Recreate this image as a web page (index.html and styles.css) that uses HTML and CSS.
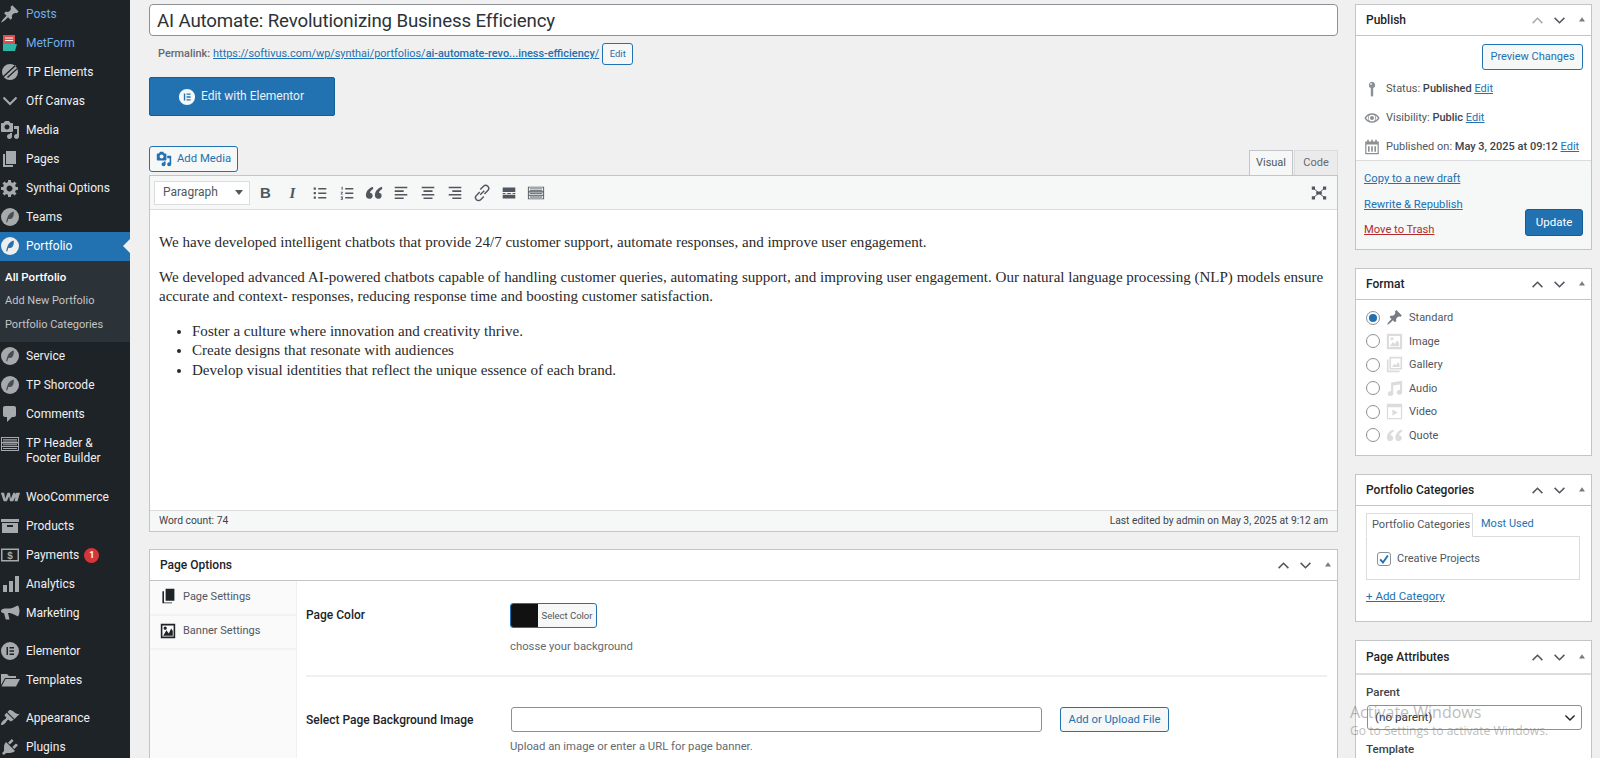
FILE: index.html
```html
<!DOCTYPE html>
<html lang="en">
<head>
<meta charset="utf-8">
<title>Edit Portfolio</title>
<link rel="stylesheet" href="styles.css">
</head>
<body>
<svg class="defs" aria-hidden="true">
  <symbol id="i-pin" viewBox="0 0 20 20"><path d="M10.44 3.02l1.82-1.82 6.36 6.35-1.83 1.82c-1.05-.68-2.48-.57-3.41.36l-.75.75c-.92.93-1.04 2.35-.35 3.41l-1.83 1.82-2.41-2.41-2.8 2.79c-.42.42-3.38 2.71-3.8 2.29s1.86-3.39 2.28-3.81l2.79-2.79L4.1 9.36l1.83-1.82c1.05.69 2.48.57 3.4-.36l.75-.75c.93-.92 1.05-2.35.36-3.41z"/></symbol>
  <symbol id="i-media" viewBox="0 0 20 20"><path d="M13 11V4c0-.55-.45-1-1-1h-1.67L9 1H5L3.67 3H2c-.55 0-1 .45-1 1v7c0 .55.45 1 1 1h10c.55 0 1-.45 1-1zM7 4.5c1.38 0 2.5 1.12 2.5 2.5S8.38 9.5 7 9.5 4.5 8.38 4.5 7 5.62 4.5 7 4.5zM14 6h5v10.5c0 1.38-1.12 2.5-2.5 2.5S14 17.88 14 16.5s1.12-2.5 2.5-2.5c.17 0 .34.02.5.05V9h-3V6zm-4 8.05V13h2v3.5c0 1.38-1.12 2.5-2.5 2.5S7 17.88 7 16.5 8.12 14 9.5 14c.17 0 .34.02.5.05z"/></symbol>
  <symbol id="i-page" viewBox="0 0 20 20"><path d="M6 15V2h10v13H6zm-1 1h8v2H3V5h2v11z"/></symbol>
  <symbol id="i-gear" viewBox="0 0 20 20"><path d="M18 12h-2.18c-.17.7-.44 1.35-.81 1.93l1.54 1.54-2.1 2.1-1.54-1.54c-.58.36-1.23.63-1.91.79V19H8v-2.18c-.68-.16-1.33-.43-1.91-.79l-1.54 1.54-2.12-2.12 1.54-1.54c-.36-.58-.63-1.23-.79-1.91H1V9.03h2.17c.16-.7.44-1.35.8-1.94L2.43 5.55l2.1-2.1 1.54 1.54c.58-.37 1.24-.64 1.93-.81V2h3v2.18c.68.16 1.33.43 1.91.79l1.54-1.54 2.12 2.12-1.54 1.54c.36.59.64 1.24.8 1.94H18V12zm-8.5 1.5c1.66 0 3-1.34 3-3s-1.34-3-3-3-3 1.34-3 3 1.34 3 3 3z"/></symbol>
  <symbol id="i-comment" viewBox="0 0 20 20"><path d="M5 2h9c1.1 0 2 .9 2 2v7c0 1.1-.9 2-2 2h-2l-5 5v-5H5c-1.1 0-2-.9-2-2V4c0-1.1.9-2 2-2z"/></symbol>
  <symbol id="i-plug" viewBox="0 0 20 20"><path d="M13.11 4.36L9.87 7.6 8 5.73l3.24-3.24c.35-.34 1.05-.2 1.56.32.52.51.66 1.21.31 1.55zm-8 1.77l.91-1.12 9.01 9.01-1.19.84c-.71.71-2.63 1.16-3.82 1.16H6.14L4.9 17.26c-.59.59-1.54.59-2.12 0-.59-.58-.59-1.53 0-2.12l1.24-1.24v-3.88c0-1.13.4-3.19 1.09-3.89zm7.26 3.97l3.24-3.24c.34-.35 1.04-.21 1.55.31.52.51.66 1.21.31 1.55l-3.24 3.25z"/></symbol>
  <symbol id="i-brush" viewBox="0 0 20 20"><path d="M14.5 11.1L7.4 4l1.5-1.5c.5-.6 2.3-.5 3.5.3 1.2.8 1.4 1.3 2.9 2.1 1.2.6 2.5 1.3 4.5.9zm-.7.7L6.7 4.7 4.9 6.5c-.4.4-.4 1 0 1.4L6 9c.4.4.4 1 0 1.4-.6.6-1.4 1.1-2.2 1.7-.4.3-.7.5-1 .8-1.2 1.2-2.3 3.4-1.7 4 .6.6 2.8-.5 4-1.7.3-.3.6-.6.8-1 .6-.8 1.1-1.6 1.7-2.2.4-.4 1-.4 1.4 0l1.1 1.1c.4.4 1 .4 1.4 0z"/></symbol>
  <symbol id="i-chart" viewBox="0 0 20 20"><path d="M3 11h4v7H3zM9 7h4v11H9zM15 2h4v16h-4z"/></symbol>
  <symbol id="i-mega" viewBox="0 0 20 20"><path d="M18 2.5c1 1.5 1.500 4 1.500 5.500s-.5 4-1.500 5.500c-1.500-.5-5-3-8-3.500H8l1.500 6.500H5.800L4 10.200C2.300 10 1 9.300 1 8c0-1.500 2-2.500 4-2.500h5c3-.5 6.500-2.500 8-3z"/></symbol>
  <symbol id="i-folder" viewBox="0 0 20 20"><path d="M1 4h6l2 2h7v2H5L1 15V4zm4.500 5H20l-4 7.500H1.500z"/></symbol>
  <symbol id="i-grid" viewBox="0 0 20 20"><path fill-rule="evenodd" d="M1 3h18v14H1zM2 4v4h16V4zM2 9.500v2.500h16V9.500zM2 13v3h16v-3zM3 5h14v.8H3zM3 6.600h14v.8H3zM3 10.300h14v.9H3zM3 14h14v1H3z"/></symbol>
  <symbol id="i-woo" viewBox="0 0 24 14"><path d="M1 2h4l1.200 7L9 2h3l1 7 3-7h2.500l-.8 2 2-2H24l-3 10h-3.500l1-5-2.800 5H12l-1-6-2.800 6H4.500z"/></symbol>
  <symbol id="i-box" viewBox="0 0 20 20"><path d="M1 3h18v3H1zM2 7h16v10H2zm5 2v2h6V9z" fill-rule="evenodd"/></symbol>
  <symbol id="i-pen" viewBox="0 0 20 20"><circle cx="10" cy="10" r="9"/><path fill="#2a2f38" fill-opacity=".75" d="M13.800 4.600c-2.300.2-4.900 2.400-6.200 5.300-.6 1.400-1.100 3.200-1.500 5.300l1.100.3c.4-1.500.8-2.800 1.300-3.800 1.500.5 3 .1 4-1 1.100-1.300 1.500-3.400 1.300-6.100z"/></symbol>
  <symbol id="i-pen-on" viewBox="0 0 20 20"><circle cx="10" cy="10" r="9" fill="#eee"/><path fill="#2271b1" d="M13.800 4.600c-2.300.2-4.900 2.400-6.200 5.300-.6 1.400-1.100 3.200-1.500 5.300l1.100.3c.4-1.500.8-2.800 1.300-3.800 1.500.5 3 .1 4-1 1.100-1.300 1.500-3.400 1.300-6.100z"/></symbol>
  <symbol id="i-ele" viewBox="0 0 20 20"><path fill-rule="evenodd" d="M10 1a9 9 0 1 1 0 18 9 9 0 0 1 0-18zM6.500 6v8H8V6zM9.500 6v1.500H14V6zM9.500 9.250v1.500H14v-1.500zM9.500 12.500V14H14v-1.500z"/></symbol>
  <symbol id="i-up" viewBox="0 0 20 20"><path d="M3.500 13.500L10 7l6.500 6.500" fill="none" stroke="currentColor" stroke-width="2"/></symbol>
  <symbol id="i-down" viewBox="0 0 20 20"><path d="M3.500 6.500L10 13l6.500-6.500" fill="none" stroke="currentColor" stroke-width="2"/></symbol>
  <symbol id="i-tri" viewBox="0 0 20 20"><path d="M10 5.500l5 7H5z"/></symbol>
  <symbol id="i-image" viewBox="0 0 20 20"><path fill-rule="evenodd" d="M1 1h18v18H1zM3.500 3.500v13h13v-13zM4.500 15.500l3.500-5 2.500 2.500L13 8.500l2.500 3.500v3.500zM7 5a1.800 1.800 0 1 1 0 3.600A1.800 1.800 0 0 1 7 5z"/></symbol>
  <symbol id="i-gallery" viewBox="0 0 20 20"><path fill-rule="evenodd" d="M4 1h15v15H4zM6 3v11h11V3zM7 13l3-4 2 2 2-4 2 3v3zM1 4h2v13h13v2H1z"/></symbol>
  <symbol id="i-audio" viewBox="0 0 20 20"><path d="M6 3l13-2v13.500a3.200 2.800 0 1 1-2.500-2.700V5.200l-8 1.300v9.500a3.200 2.800 0 1 1-2.500-2.700z"/></symbol>
  <symbol id="i-video" viewBox="0 0 20 20"><path fill-rule="evenodd" d="M1 1h18v18H1zM2.500 5v12.500h15V5zM7.500 7.500l6.500 3.800-6.500 3.800z"/></symbol>
  <symbol id="i-quote" viewBox="0 0 20 20"><path d="M9 3C5 4 1 7.500 1 12.500c0 2.300 1.500 4 3.700 4S8.500 15 8.500 13s-1.400-3.300-3.100-3.300c.4-1.800 1.800-3.300 3.600-4zm10 0c-4 1-8 4.500-8 9.500 0 2.300 1.500 4 3.700 4s3.800-1.500 3.800-3.500-1.400-3.300-3.100-3.300c.4-1.800 1.800-3.300 3.600-4z"/></symbol>
  <symbol id="i-eye" viewBox="0 0 20 20"><path fill-rule="evenodd" d="M10 4c4.200 0 7.600 2.500 9.500 6-1.900 3.500-5.300 6-9.500 6S2.400 13.500.5 10C2.400 6.500 5.800 4 10 4zm0 1.800A4.200 4.200 0 1 0 10 14.200 4.200 4.200 0 0 0 10 5.800zM2.600 10c.9 1.400 2.200 2.500 3.600 3.200A5.500 5.500 0 0 1 4.800 10c0-1.200.5-2.400 1.300-3.200C4.700 7.500 3.500 8.600 2.600 10zm11.200-3.200c.8.800 1.400 2 1.400 3.200s-.5 2.400-1.400 3.200c1.400-.7 2.700-1.800 3.600-3.200-.9-1.400-2.200-2.500-3.600-3.200zM10 7.500a2.500 2.500 0 1 1 0 5 2.500 2.500 0 0 1 0-5z"/></symbol>
  <symbol id="i-cal" viewBox="0 0 20 20"><path fill-rule="evenodd" d="M1.500 3H4V1h2v2h3V1h2v2h3V1h2v2h2.500v16h-17zM3 7v10.500h14V7zM5 9h2v7H5zM9 9h2v7H9zM13 9h2v7h-2z"/></symbol>
  <symbol id="i-mapin" viewBox="0 0 20 20"><path d="M10 1a4 4 0 0 1 1.500 7.700V18L10 20l-1.500-2V8.700A4 4 0 0 1 10 1zM8.800 2.800a1.100 1.100 0 1 0 0 2.200 1.100 1.100 0 0 0 0-2.200z" fill-rule="evenodd"/></symbol>
  <symbol id="i-book" viewBox="0 0 20 20"><path d="M7 1h11v15H7zM5 4v14h10v1H3V4z"/></symbol>
  <symbol id="i-banner" viewBox="0 0 20 20"><path fill-rule="evenodd" d="M1 1h18v18H1zM3 3v14h14V3zM4 16l4-7 3 4 3-6 2 3v6zM6.500 4.500a2 2 0 1 1 0 4 2 2 0 0 1 0-4z"/></symbol>
  <symbol id="i-ul" viewBox="0 0 20 20"><path d="M3 4h2.400v2.400H3zM8 4.500h9V6H8zM3 9h2.400v2.400H3zM8 9.500h9V11H8zM3 14h2.400v2.400H3zM8 14.500h9V16H8z"/></symbol>
  <symbol id="i-ol" viewBox="0 0 20 20"><path d="M8 4.500h9V6H8zM8 9.500h9V11H8zM8 14.500h9V16H8zM4 3h1.200v3.500H4zM3 8.500h2.400v1L4.200 11h1.200v.8H3v-.8l1.400-1.600H3zM3 14h2.400v3.500H3v-.8h1.400v-.6H3.600v-.7h.8V15H3z"/></symbol>
  <symbol id="i-left" viewBox="0 0 20 20"><path d="M3 3h14v1.800H3zM3 7h10v1.800H3zM3 11h14v1.800H3zM3 15h10v1.800H3z"/></symbol>
  <symbol id="i-center" viewBox="0 0 20 20"><path d="M3 3h14v1.800H3zM5 7h10v1.800H5zM3 11h14v1.800H3zM5 15h10v1.800H5z"/></symbol>
  <symbol id="i-right" viewBox="0 0 20 20"><path d="M3 3h14v1.800H3zM7 7h10v1.800H7zM3 11h14v1.800H3zM7 15h10v1.800H7z"/></symbol>
  <symbol id="i-link" viewBox="0 0 20 20"><path d="M8 12L12.500 7.500M7.500 9L3.800 12.700a3.300 3.300 0 0 0 4.700 4.700L12 13.800M8 6.200L11.700 2.600a3.300 3.300 0 0 1 4.700 4.700L12.700 11" fill="none" stroke="currentColor" stroke-width="1.600"/></symbol>
  <symbol id="i-more" viewBox="0 0 20 20"><path d="M3 4h14v5H3zM3 12h14v4H3zM3 10h3v1H3zM8 10h4v1H8zM14 10h3v1h-3z"/></symbol>
  <symbol id="i-full" viewBox="0 0 20 20"><path d="M1 2h4v4H1zM15 2h4v4h-4zM1 14h4v4H1zM15 14h4v4h-4zM6.500 8h7v4h-7z"/><path d="M3 4l14 12M17 4L3 16" stroke="currentColor" stroke-width="1.200" fill="none"/></symbol>
</svg>

<div class="page">
  <nav class="menu">
    <a class="mi link"><svg class="mic"><use href="#i-pin"/></svg><span>Posts</span></a>
    <a class="mi link"><svg class="mic" viewBox="0 0 20 20"><path fill="#e04b4b" d="M3 2h12v9H3z"/><path fill="#2fb5a5" d="M3 11h14l-2 7H3z"/><path fill="#fff" d="M5 4.500h8v1H5zM5 7h8v1H5z"/></svg><span>MetForm</span></a>
    <a class="mi"><svg class="mic" viewBox="0 0 20 20"><path fill-rule="evenodd" d="M10 2a8 8 0 1 1 0 16 8 8 0 0 1 0-16zM3 14L15 3l1 1L4 15zM7 15L17 6l.7 1L8 16z"/></svg><span>TP Elements</span></a>
    <a class="mi"><svg class="mic"><use href="#i-down"/></svg><span>Off Canvas</span></a>
    <a class="mi"><svg class="mic"><use href="#i-media"/></svg><span>Media</span></a>
    <a class="mi"><svg class="mic"><use href="#i-page"/></svg><span>Pages</span></a>
    <a class="mi"><svg class="mic"><use href="#i-gear"/></svg><span>Synthai Options</span></a>
    <a class="mi"><svg class="mic"><use href="#i-pen"/></svg><span>Teams</span></a>
    <a class="mi current"><svg class="mic"><use href="#i-pen-on"/></svg><span>Portfolio</span></a>
    <div class="sub">
      <a class="si on">All Portfolio</a>
      <a class="si">Add New Portfolio</a>
      <a class="si">Portfolio Categories</a>
    </div>
    <a class="mi"><svg class="mic"><use href="#i-pen"/></svg><span>Service</span></a>
    <a class="mi"><svg class="mic"><use href="#i-pen"/></svg><span>TP Shorcode</span></a>
    <a class="mi"><svg class="mic"><use href="#i-comment"/></svg><span>Comments</span></a>
    <a class="mi two"><svg class="mic"><use href="#i-grid"/></svg><span>TP Header &amp; Footer Builder</span></a>
    <a class="mi gap"><svg class="mic woo"><use href="#i-woo"/></svg><span>WooCommerce</span></a>
    <a class="mi"><svg class="mic"><use href="#i-box"/></svg><span>Products</span></a>
    <a class="mi"><svg class="mic" viewBox="0 0 20 20"><path fill-rule="evenodd" d="M1 3.500h18v13H1zM2.500 5v10h15V5z"/><text class="dollar" x="10" y="13.500" text-anchor="middle">$</text></svg><span>Payments</span><b class="badge">1</b></a>
    <a class="mi"><svg class="mic"><use href="#i-chart"/></svg><span>Analytics</span></a>
    <a class="mi"><svg class="mic"><use href="#i-mega"/></svg><span>Marketing</span></a>
    <a class="mi gap"><svg class="mic"><use href="#i-ele"/></svg><span>Elementor</span></a>
    <a class="mi"><svg class="mic"><use href="#i-folder"/></svg><span>Templates</span></a>
    <a class="mi gap"><svg class="mic"><use href="#i-brush"/></svg><span>Appearance</span></a>
    <a class="mi"><svg class="mic"><use href="#i-plug"/></svg><span>Plugins</span></a>
  </nav>

  <main class="content">
    <div class="col-main">
      <div class="title-input">AI Automate: Revolutionizing Business Efficiency</div>
      <div class="permalink">
        <strong>Permalink:</strong>
        <a class="plink">https://softivus.com/wp/synthai/portfolios/<b>ai-automate-revo...iness-efficiency</b>/</a>
        <span class="btn tiny">Edit</span>
      </div>
      <div class="ele-btn"><svg class="ele-ic"><use href="#i-ele"/></svg>Edit with Elementor</div>

      <div class="media-row">
        <span class="btn add-media"><svg class="am-ic"><use href="#i-media"/></svg>Add Media</span>
        <div class="tabs"><span class="tab on">Visual</span><span class="tab">Code</span></div>
      </div>
      <section class="editor">
        <div class="toolbar">
          <div class="fmt"><span>Paragraph</span><i class="caret"></i></div>
          <span class="tb tb-b">B</span>
          <span class="tb tb-i">I</span>
          <span class="tb"><svg class="tbi"><use href="#i-ul"/></svg></span>
          <span class="tb"><svg class="tbi"><use href="#i-ol"/></svg></span>
          <span class="tb"><svg class="tbi"><use href="#i-quote"/></svg></span>
          <span class="tb"><svg class="tbi"><use href="#i-left"/></svg></span>
          <span class="tb"><svg class="tbi"><use href="#i-center"/></svg></span>
          <span class="tb"><svg class="tbi"><use href="#i-right"/></svg></span>
          <span class="tb"><svg class="tbi"><use href="#i-link"/></svg></span>
          <span class="tb"><svg class="tbi"><use href="#i-more"/></svg></span>
          <span class="tb"><svg class="tbi"><use href="#i-grid"/></svg></span>
          <span class="tb tb-full"><svg class="tbi small"><use href="#i-full"/></svg></span>
        </div>
        <div class="body">
          <p>We have developed intelligent chatbots that provide 24/7 customer support, automate responses, and improve user engagement.</p>
          <p>We developed advanced AI-powered chatbots capable of handling customer queries, automating support, and improving user engagement. Our natural language processing (NLP) models ensure accurate and context- responses, reducing response time and boosting customer satisfaction.</p>
          <ul>
            <li>Foster a culture where innovation and creativity thrive.</li>
            <li>Create designs that resonate with audiences</li>
            <li>Develop visual identities that reflect the unique essence of each brand.</li>
          </ul>
        </div>
        <div class="status"><span>Word count: 74</span><span>Last edited by admin on May 3, 2025 at 9:12 am</span></div>
      </section>

      <section class="box options">
        <header class="box-h"><h2>Page Options</h2><div class="ctl"><svg class="c"><use href="#i-up"/></svg><svg class="c"><use href="#i-down"/></svg><svg class="c t"><use href="#i-tri"/></svg></div></header>
        <div class="opt-body">
          <aside class="opt-tabs">
            <div class="opt-tab"><svg class="ot-ic"><use href="#i-book"/></svg>Page Settings</div>
            <div class="opt-tab"><svg class="ot-ic"><use href="#i-banner"/></svg>Banner Settings</div>
          </aside>
          <div class="opt-main">
            <div class="field f1">
              <label>Page Color</label>
              <div class="val">
                <div class="color"><i class="swatch"></i><span>Select Color</span></div>
                <p class="help">chosse your background</p>
              </div>
            </div>
            <div class="field f2">
              <label>Select Page Background Image</label>
              <div class="val">
                <div class="upl"><div class="txt"></div><span class="btn upb">Add or Upload File</span></div>
                <p class="help">Upload an image or enter a URL for page banner.</p>
              </div>
            </div>
          </div>
        </div>
      </section>
    </div>

    <aside class="col-side">
      <section class="box publish">
        <header class="box-h"><h2>Publish</h2><div class="ctl"><svg class="c dim"><use href="#i-up"/></svg><svg class="c"><use href="#i-down"/></svg><svg class="c t"><use href="#i-tri"/></svg></div></header>
        <div class="pub-top">
          <div class="prev"><span class="btn">Preview Changes</span></div>
          <div class="pub-row"><svg class="pi"><use href="#i-mapin"/></svg><span>Status: <b>Published</b> <a>Edit</a></span></div>
          <div class="pub-row"><svg class="pi"><use href="#i-eye"/></svg><span>Visibility: <b>Public</b> <a>Edit</a></span></div>
          <div class="pub-row"><svg class="pi"><use href="#i-cal"/></svg><span>Published on: <b>May 3, 2025 at 09:12</b> <a>Edit</a></span></div>
        </div>
        <div class="pub-foot">
          <div class="pf-links"><a>Copy to a new draft</a><a>Rewrite &amp; Republish</a><a class="red">Move to Trash</a></div>
          <span class="update">Update</span>
        </div>
      </section>

      <section class="box format">
        <header class="box-h"><h2>Format</h2><div class="ctl"><svg class="c"><use href="#i-up"/></svg><svg class="c"><use href="#i-down"/></svg><svg class="c t"><use href="#i-tri"/></svg></div></header>
        <div class="fmt-list">
          <div class="fr"><i class="radio on"></i><svg class="fi pin"><use href="#i-pin"/></svg>Standard</div>
          <div class="fr"><i class="radio"></i><svg class="fi"><use href="#i-image"/></svg>Image</div>
          <div class="fr"><i class="radio"></i><svg class="fi"><use href="#i-gallery"/></svg>Gallery</div>
          <div class="fr"><i class="radio"></i><svg class="fi"><use href="#i-audio"/></svg>Audio</div>
          <div class="fr"><i class="radio"></i><svg class="fi"><use href="#i-video"/></svg>Video</div>
          <div class="fr"><i class="radio"></i><svg class="fi"><use href="#i-quote"/></svg>Quote</div>
        </div>
      </section>

      <section class="box cats">
        <header class="box-h"><h2>Portfolio Categories</h2><div class="ctl"><svg class="c"><use href="#i-up"/></svg><svg class="c"><use href="#i-down"/></svg><svg class="c t"><use href="#i-tri"/></svg></div></header>
        <div class="cat-body">
          <div class="cat-tabs"><span class="ct on">Portfolio Categories</span><a class="ct">Most Used</a></div>
          <div class="cat-panel"><i class="check"><svg viewBox="0 0 14 14" class="chk"><path d="M2.500 7.500L5.800 11 11.500 3" fill="none" stroke="#2271b1" stroke-width="2.200"/></svg></i>Creative Projects</div>
          <a class="add-cat">+ Add Category</a>
        </div>
      </section>

      <section class="box attrs">
        <header class="box-h thick"><h2>Page Attributes</h2><div class="ctl"><svg class="c"><use href="#i-up"/></svg><svg class="c"><use href="#i-down"/></svg><svg class="c t"><use href="#i-tri"/></svg></div></header>
        <div class="attr-body">
          <p class="al">Parent</p>
          <div class="sel"><span>(no parent)</span><svg class="sel-c"><use href="#i-down"/></svg></div>
          <p class="al tpl">Template</p>
        </div>
      </section>
    </aside>
  </main>
</div>
<div class="watermark"><div class="w1">Activate Windows</div><div class="w2">Go to Settings to activate Windows.</div></div>
</body>
</html>
```
FILE: styles.css
```css
* { box-sizing: border-box; }
html, body { margin: 0; height: 758px; overflow: hidden; }
body { background: #f0f0f1; font: 12px/1.4 Roboto, "Noto Sans", sans-serif; color: #3c434a; position: relative; }
.defs { width: 0; height: 0; position: absolute; }
a { color: #2271b1; text-decoration: underline; }
p { margin: 0; }
.page { display: flex; height: 758px; overflow: hidden; }

/* sidebar */
.menu { width: 130px; flex: none; background: #1d2327; display: flex; flex-direction: column; height: 758px; overflow: hidden; }
.mi { flex: none; height: 29px; display: flex; align-items: center; color: #f0f0f1; text-decoration: none; fill: #a7aaad; position: relative; font-size: 12px; }
.mi:first-child { margin-top: -.5px; }
.mi span { margin-left: 6px; white-space: nowrap; }
.mic { width: 20px; height: 20px; flex: none; color: #a7aaad; }
.dollar { font: 700 10px "Liberation Mono", monospace; }
.mi.link { color: #72aee6; }
.mi.current { background: #2271b1; color: #fff; fill: #fff; }
.mi.current::after { content: ""; position: absolute; right: 0; top: 50%; margin-top: -7px; border: 7px solid transparent; border-right-color: #f0f0f1; border-left-width: 0; }
.mi.two { height: 45px; }
.mi.two span { white-space: normal; line-height: 15px; width: 92px; }
.mi.two .mic { align-self: flex-start; margin-top: 5px; }
.mi.gap { margin-top: 9px; }
.woo { height: 14px; }
.sub { flex: none; height: 81px; background: #2c3338; padding: 5px 0; display: flex; flex-direction: column; }
.si { height: 23.500px; line-height: 23.500px; padding-left: 5px; color: #c3c4c7; text-decoration: none; font-size: 11px; }
.si.on { color: #fff; font-weight: 500; font-size: 11.500px; }
.badge { width: 15px; height: 15px; border-radius: 50%; background: #d63638; color: #fff; font-size: 9px; line-height: 15px; text-align: center; margin-left: 5px; }

/* content grid */
.content { flex: 1; min-width: 0; display: grid; grid-template-columns: 1189px 237px; column-gap: 17px; padding: 4px 0 0 19px; align-items: start; }
.col-main, .col-side { display: flex; flex-direction: column; min-width: 0; }

.title-input { height: 32px; border: 1px solid #8c8f94; border-radius: 4px; background: #fff; padding: 1px 7px 0; font-size: 18.700px; letter-spacing: -.15px; line-height: 30px; color: #2c3338; }
.permalink { display: flex; align-items: center; margin-top: 6px; height: 23px; padding-left: 9px; font-size: 10.900px; color: #646970; }
.permalink strong { font-weight: 500; margin-right: 3px; }
.plink b { font-weight: 500; }
.btn { display: inline-flex; align-items: center; justify-content: center; border: 1px solid #2271b1; border-radius: 3px; background: #f6f7f7; color: #2271b1; white-space: nowrap; }
.tiny { height: 22px; width: 31px; font-size: 9.500px; margin-left: 3px; }
.ele-btn { width: 186px; height: 39px; margin-top: 12px; background: #2271b1; border: 1px solid #135e96; border-radius: 2px; color: #f0f0f1; display: flex; align-items: center; justify-content: center; font-size: 12px; gap: 5px; padding-right: 2px; }
.ele-ic { width: 18px; height: 18px; fill: #f6f7f7; }

.media-row { display: flex; justify-content: space-between; align-items: flex-end; margin-top: 30px; height: 29px; }
.add-media { height: 26px; width: 89px; margin-bottom: 3px; font-size: 11.300px; gap: 5px; justify-content: flex-start; padding-left: 6px; }
.am-ic { width: 16px; height: 16px; fill: #2271b1; }
.tabs { display: flex; }
.tab { width: 44px; height: 25px; line-height: 24px; text-align: center; font-size: 11px; border: 1px solid #dcdcde; background: #ebebec; color: #646970; margin-left: 1px; border-bottom: 0; }
.tab.on { background: #f6f7f7; color: #50575e; border-color: #c3c4c7; }

.editor { border: 1px solid #c3c4c7; background: #fff; height: 357px; display: flex; flex-direction: column; }
.toolbar { height: 34px; flex: none; background: #f6f7f7; border-bottom: 1px solid #dcdcde; display: flex; align-items: center; padding-left: 4px; position: relative; }
.fmt { width: 96px; height: 24px; background: #fff; border: 1px solid #dcdcde; display: flex; align-items: center; justify-content: space-between; padding: 0 6px 0 8px; color: #50575e; font-size: 12px; margin-right: 2px; }
.caret { width: 0; height: 0; border: 4px solid transparent; border-top: 5px solid #50575e; border-bottom: 0; }
.tb { width: 27px; flex: none; display: flex; align-items: center; justify-content: center; color: #50575e; fill: #50575e; height: 22px; }
.tb-b { font: 700 15px/22px "Liberation Sans", sans-serif; }
.tb-i { font: italic 700 15px/22px "Liberation Serif", serif; }
.tb-full { margin-left: auto; margin-right: 5px; }
.tbi { width: 18px; height: 18px; }
.tbi.small { width: 16px; height: 16px; }

.body { flex: 1; padding: 23px 9px 0; font: 15.050px/19.600px "Liberation Serif", serif; color: #2a2a2a; }
.body p { margin-bottom: 15px; }
.body ul { margin: 0; padding-left: 33px; }
.status { height: 21px; flex: none; background: #f6f7f7; border-top: 1px solid #dcdcde; display: flex; align-items: center; justify-content: space-between; padding: 0 9px; font-size: 10.300px; color: #3c434a; }

/* boxes */
.box { background: #fff; border: 1px solid #c3c4c7; }
.box-h { height: 31px; display: flex; align-items: center; justify-content: space-between; border-bottom: 1px solid #c3c4c7; padding-left: 10px; }
.box-h.thick { height: 34px; border-bottom-width: 2px; border-bottom-color: #dcdcde; }
.box-h h2 { margin: 0; font-size: 12px; font-weight: 500; color: #1d2327; }
.ctl { display: flex; color: #50575e; fill: #787c82; padding-right: 3px; gap: 7px; }
.c { width: 15px; height: 15px; }
.c.dim { color: #a7aaad; }
.c.t { width: 12px; height: 12px; margin-left: 2px; margin-top: 1px; }

.options { margin-top: 17px; height: 240px; }
.options .box-h { height: 31px; }
.opt-body { display: flex; height: 210px; }
.opt-tabs { width: 147px; background: #fafafa; border-right: 1px solid #f0f0f1; flex: none; }
.opt-tab { height: 34.500px; display: flex; align-items: center; padding: 0 0 2px 10px; border-bottom: 2px solid #f3f3f3; font-size: 11px; color: #50575e; gap: 7px; }
.ot-ic { width: 16px; height: 16px; fill: #1d2327; }
.opt-main { flex: 1; padding: 0 10px 0 9px; }
.field { display: flex; }
.field label { width: 204px; flex: none; font-weight: 500; color: #1d2327; font-size: 12px; }
.f1 { height: 96px; border-bottom: 2px solid #f0f0f1; padding-top: 22px; }
.f1 label { padding-top: 4px; }
.f2 { padding-top: 30px; }
.f2 label { padding-top: 5px; }
.val { flex: 1; }
.color { width: 87px; height: 25px; border: 1px solid #2271b1; border-radius: 3px; display: flex; overflow: hidden; background: #f6f7f7; }
.swatch { width: 26px; background: #111; }
.color span { flex: 1; text-align: center; font-size: 9.500px; line-height: 23px; color: #50575e; border-left: 1px solid #111; }
.help { font-size: 11.300px; color: #646970; margin-top: 11px; }
.f2 .help { margin-top: 7px; }
.upl { display: flex; gap: 18px; padding-left: 1px; }
.txt { width: 531px; height: 25px; background: #fff; border: 1px solid #8c8f94; border-radius: 3px; }
.upb { height: 25px; width: 109px; font-size: 11.300px; }

/* side */
.col-side .box + .box { margin-top: 18px; }
.publish { height: 246px; display: flex; flex-direction: column; }
.pub-top { height: 125px; flex: none; padding: 8px 8px 0 10px; border-bottom: 1px solid #dcdcde; }
.prev { display: flex; justify-content: flex-end; margin-bottom: 4px; }
.prev .btn { height: 26px; width: 101px; font-size: 11px; }
.pub-row { display: flex; align-items: center; height: 29px; font-size: 11px; color: #50575e; margin-left: -2px; white-space: nowrap; }
.pub-row b { font-weight: 500; color: #3c434a; }
.pi { width: 16px; height: 16px; fill: #8c8f94; flex: none; margin-right: 6px; }
.pub-foot { flex: 1; background: #f6f7f7; padding: 5px 8px 0 8px; display: flex; justify-content: space-between; font-size: 11.200px; position: relative; }
.pf-links { display: flex; flex-direction: column; }
.pf-links a { height: 25.500px; line-height: 25px; }
.red { color: #b32d2e; }
.update { align-self: flex-start; margin-top: 43px; width: 58px; height: 27px; background: #2271b1; border: 1px solid #135e96; border-radius: 3px; color: #fff; text-align: center; line-height: 25px; font-size: 11.500px; }

.format { height: 188px; }
.fmt-list { padding: 6px 10px 0; }
.fr { height: 23.500px; display: flex; align-items: center; font-size: 11px; color: #50575e; }
.radio { width: 14px; height: 14px; border: 1px solid #8c8f94; border-radius: 50%; background: #fff; margin-right: 6px; flex: none; position: relative; }
.radio.on::after { content: ""; position: absolute; left: 2px; top: 2px; width: 8px; height: 8px; background: #2271b1; border-radius: 50%; }
.fi { width: 17px; height: 17px; fill: #dcdcde; margin-right: 6px; flex: none; }
.fi.pin { fill: #787c82; }

.cats { height: 148px; }
.cat-body { padding: 7px 11px 0 10px; }
.cat-tabs { display: flex; height: 24px; position: relative; z-index: 1; font-size: 11px; }
.ct { padding: 0 5px; line-height: 22px; }
.ct.on { border: 1px solid #dcdcde; border-bottom: 1px solid #fff; color: #50575e; width: 107px; height: 24px; white-space: nowrap; }
a.ct { text-decoration: none; margin-left: 3px; }
.cat-panel { border: 1px solid #dcdcde; height: 44px; margin-top: -1px; display: flex; align-items: center; padding: 1px 0 0 10px; font-size: 11px; color: #50575e; }
.check { width: 14px; height: 14px; border: 1px solid #8c8f94; border-radius: 3px; background: #fff; margin-right: 6px; display: block; flex: none; }
.chk { display: block; width: 12px; height: 12px; }
.add-cat { display: block; margin-top: 8px; font-size: 11.500px; }

.attrs { height: 140px; }
.attr-body { padding: 9px 10px 0; }
.al { font-size: 11.500px; font-weight: 500; color: #3c434a; }
.sel { height: 25px; margin: 5px 0 0 1px; width: 215px; border: 1px solid #8c8f94; border-radius: 3px; background: #fff; display: flex; align-items: center; justify-content: space-between; padding: 0 4px 0 7px; font-size: 11.700px; color: #2c3338; }
.sel-c { width: 14px; height: 14px; color: #1d2327; }
.tpl { margin-top: 11px; }

.watermark { position: absolute; left: 1350px; top: 701px; color: rgba(120,120,120,.5); pointer-events: none; white-space: nowrap; font-family: "Open Sans", sans-serif; }
.w1 { font-size: 16px; line-height: 22px; }
.w2 { font-size: 12.100px; line-height: 16px; }
```
